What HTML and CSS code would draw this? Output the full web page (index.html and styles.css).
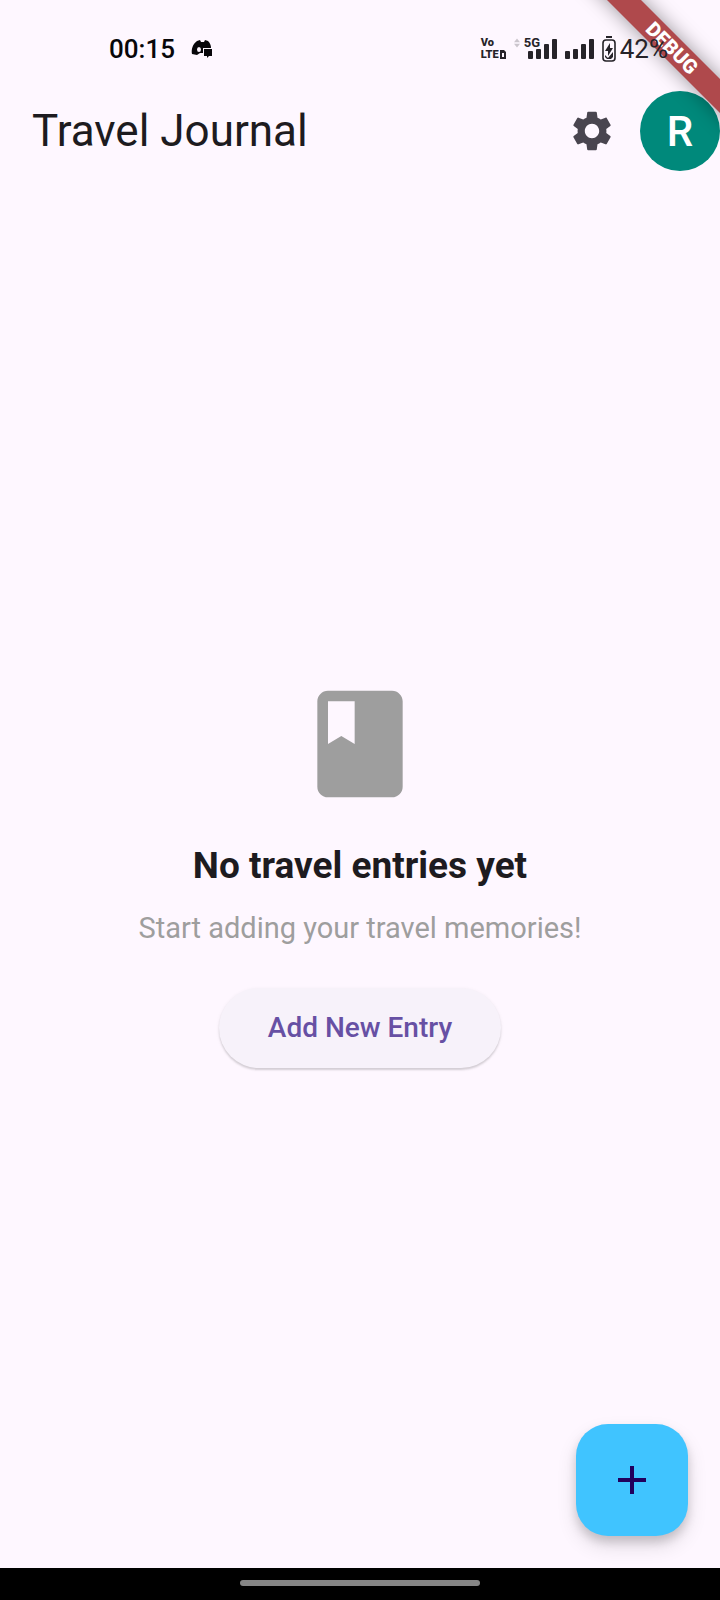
FILE: index.html
```html
<!DOCTYPE html>
<html lang="en">
<head>
<meta charset="utf-8">
<meta name="viewport" content="width=device-width, initial-scale=1">
<title>Travel Journal</title>
<link rel="stylesheet" href="styles.css">
</head>
<body>
<div class="screen">
  <div class="status-bar">
    <div class="status-left">
      <span>00:15</span>
      <svg class="chat-icon" viewBox="0 0 22 20" aria-hidden="true">
        <path fill="#08070a" fill-rule="evenodd" d="M6 2 9 1l1 2h3l1-2 3 1c2 2 3 4 3 7h-8v5H9l-3 2-5-1c-1-5 1-10 5-13ZM8 8a2 2.500 0 1 0 0 5 2 2.500 0 0 0 0-5Z"/>
        <path fill="#08070a" d="M13 10h8v7h-3l-2 2v-2h-3z"/>
      </svg>
    </div>
    <div class="status-right">
      <div class="volte"><span>Vo</span><span>LTE<svg class="sim" viewBox="0 0 6 9" aria-hidden="true"><path fill="#262329" fill-rule="evenodd" d="M0 0h4l2 2v7H0zM2 3h2v4H2z"/></svg></span></div>
      <svg class="arrows" viewBox="0 0 8 12" aria-hidden="true"><path fill="#cbc5cd" d="M0 5 4 0l4 5zM0 7h8l-4 5z"/></svg>
      <div class="signal">
        <svg viewBox="0 0 29 20" aria-hidden="true"><g fill="#262329"><rect y="12" width="5" height="8" rx="1"/><rect x="8" y="10" width="5" height="10" rx="1"/><rect x="16" y="5" width="5" height="15" rx="1"/><rect x="24" width="5" height="20" rx="1"/></g></svg>
        <span class="network">5G</span>
      </div>
      <div class="signal">
        <svg viewBox="0 0 29 20" aria-hidden="true"><g fill="#262329"><rect y="12" width="5" height="8" rx="1"/><rect x="8" y="10" width="5" height="10" rx="1"/><rect x="16" y="5" width="5" height="15" rx="1"/><rect x="24" width="5" height="20" rx="1"/></g></svg>
      </div>
      <svg class="battery" viewBox="0 0 14 26" aria-hidden="true">
        <path fill="#262329" d="M4 0h6v2H4z"/>
        <rect x="1" y="4" width="12" height="21" rx="3" fill="none" stroke="#262329" stroke-width="1.6"/>
        <path fill="#262329" d="M8 7 3 15h3v5l5-8H8zM3 19l3 3 5-6v5l-2 2H5l-2-2z"/>
      </svg>
      <span class="percent">42%</span>
    </div>
  </div>

  <header class="app-bar">
    <h1 class="title">Travel Journal</h1>
    <button class="icon-button" type="button" aria-label="Settings">
      <svg class="gear" viewBox="0 0 24 24" aria-hidden="true"><path fill="#49454f" d="M19.14 12.94c.04-.3.06-.61.06-.94 0-.32-.02-.64-.07-.94l2.03-1.58c.18-.14.23-.41.12-.61l-1.92-3.32c-.12-.22-.37-.29-.59-.22l-2.39.96c-.5-.38-1.03-.7-1.62-.94l-.36-2.54c-.04-.24-.24-.41-.48-.41h-3.84c-.24 0-.43.17-.47.41l-.36 2.54c-.59.24-1.13.57-1.62.94l-2.39-.96c-.22-.08-.47 0-.59.22L2.74 8.87c-.12.21-.08.47.12.61l2.03 1.58c-.05.3-.09.63-.09.94s.02.64.07.94l-2.03 1.58c-.18.14-.23.41-.12.61l1.92 3.32c.12.22.37.29.59.22l2.39-.96c.5.38 1.03.7 1.62.94l.36 2.54c.05.24.24.41.48.41h3.84c.24 0 .44-.17.47-.41l.36-2.54c.59-.24 1.13-.56 1.62-.94l2.39.96c.22.08.47 0 .59-.22l1.92-3.32c.12-.22.07-.47-.12-.61l-2.01-1.58zM12 15.6c-1.98 0-3.6-1.62-3.6-3.6s1.62-3.6 3.6-3.6 3.6 1.62 3.6 3.6-1.62 3.6-3.6 3.6z"/></svg>
    </button>
    <button class="avatar" type="button" aria-label="Account">R</button>
  </header>

  <main class="content">
    <svg class="book" viewBox="0 0 24 24" aria-hidden="true"><path fill="#9e9e9e" d="M18 2H6c-1.1 0-2 .9-2 2v16c0 1.1.9 2 2 2h12c1.1 0 2-.9 2-2V4c0-1.1-.9-2-2-2zM6 4h5v8l-2.500-1.500L6 12V4z"/></svg>
    <h2 class="headline">No travel entries yet</h2>
    <p class="hint">Start adding your travel memories!</p>
    <button class="add-entry" type="button">Add New Entry</button>
    <button class="fab" type="button" aria-label="Add">
      <svg class="plus" viewBox="0 0 24 24" aria-hidden="true"><path fill="#21005d" d="M19 13h-6v6h-2v-6H5v-2h6V5h2v6h6v2z"/></svg>
    </button>
  </main>

  <div class="nav-bar"><div class="nav-handle"></div></div>

  <div class="debug-corner"><div class="debug-band">DEBUG</div></div>
</div>
</body>
</html>
```
FILE: styles.css
```css
* {
  box-sizing: border-box;
}

body {
  margin: 0;
  background: #fef7ff;
  color: #1d1b20;
  font-family: Roboto, "Noto Sans", sans-serif;
}

button {
  border: 0;
  padding: 0;
  font-family: inherit;
  cursor: pointer;
}

svg {
  display: block;
}

.screen {
  position: relative;
  display: flex;
  flex-direction: column;
  min-height: 100vh;
}

.debug-corner {
  position: absolute;
  top: 0;
  right: 0;
  width: 160px;
  height: 160px;
  overflow: hidden;
  pointer-events: none;
}

.debug-band {
  position: absolute;
  top: 36px;
  right: -72px;
  width: 240px;
  height: 24px;
  transform: rotate(45deg);
  background: #af494c;
  box-shadow: 0 0 20px rgba(0, 0, 0, 0.4);
  color: #fff;
  font-size: 20px;
  font-weight: 900;
  line-height: 24px;
  text-align: center;
}

.status-bar {
  position: relative;
  z-index: 1;
  display: flex;
  justify-content: space-between;
  align-items: center;
  height: 75px;
  padding: 22px 52px 0 109px;
}

.status-left,
.status-right {
  display: flex;
  align-items: center;
}

.status-left {
  gap: 16px;
  color: #08070a;
  font-size: 26px;
  font-weight: 500;
}

.chat-icon {
  width: 22px;
  height: 20px;
}

.status-right {
  gap: 8px;
  color: #262329;
}

.volte {
  display: flex;
  flex-direction: column;
  font-size: 11px;
  font-weight: 900;
  line-height: 12px;
}

.volte span {
  display: flex;
  align-items: center;
  gap: 1px;
}

.sim {
  width: 6px;
  height: 9px;
}

.arrows {
  width: 6px;
  height: 10px;
  margin-bottom: 12px;
}

.signal {
  position: relative;
}

.signal svg {
  width: 29px;
  height: 20px;
}

.network {
  position: absolute;
  top: -2px;
  left: -4px;
  background: #fef7ff;
  font-size: 13px;
  font-weight: 700;
  line-height: 12px;
}

.battery {
  width: 14px;
  height: 26px;
}

.percent {
  margin-left: -4px;
  font-size: 26px;
}

.app-bar {
  display: flex;
  align-items: center;
  height: 112px;
  padding-left: 32px;
}

.title {
  flex: 1;
  margin: 0;
  font-size: 44px;
  font-weight: 400;
  line-height: 56px;
}

.icon-button {
  display: grid;
  place-items: center;
  width: 96px;
  height: 96px;
  background: none;
}

.gear {
  width: 48px;
  height: 48px;
}

.avatar {
  width: 80px;
  height: 80px;
  padding-top: 2px;
  border-radius: 50%;
  background: #00897b;
  color: #fff;
  font-size: 42px;
  font-weight: 500;
  line-height: 78px;
}

.content {
  position: relative;
  flex: 1;
  display: flex;
  flex-direction: column;
  align-items: center;
  justify-content: center;
}

.book {
  width: 128px;
  height: 128px;
}

.headline {
  margin: 32px 0 16px;
  font-size: 37px;
  font-weight: 700;
  line-height: 52px;
}

.hint {
  margin: 0 0 40px;
  color: #9e9e9e;
  font-size: 29px;
  line-height: 40px;
}

.add-entry {
  height: 80px;
  margin-bottom: 8px;
  padding: 0 49px;
  border-radius: 40px;
  background: #f7f2fa;
  box-shadow: 0 2px 2px rgba(0, 0, 0, 0.14), 0 1px 4px rgba(0, 0, 0, 0.06);
  color: #6750a4;
  font-size: 28px;
  font-weight: 500;
}

.fab {
  position: absolute;
  right: 32px;
  bottom: 32px;
  display: grid;
  place-items: center;
  width: 112px;
  height: 112px;
  border-radius: 32px;
  background: #40c4ff;
  box-shadow: 0 6px 10px rgba(0, 0, 0, 0.15), 0 10px 20px rgba(0, 0, 0, 0.12);
}

.plus {
  width: 48px;
  height: 48px;
}

.nav-bar {
  display: flex;
  align-items: center;
  justify-content: center;
  height: 32px;
  padding-bottom: 2px;
  background: #000;
}

.nav-handle {
  width: 240px;
  height: 6px;
  border-radius: 3px;
  background: #858585;
}
```
